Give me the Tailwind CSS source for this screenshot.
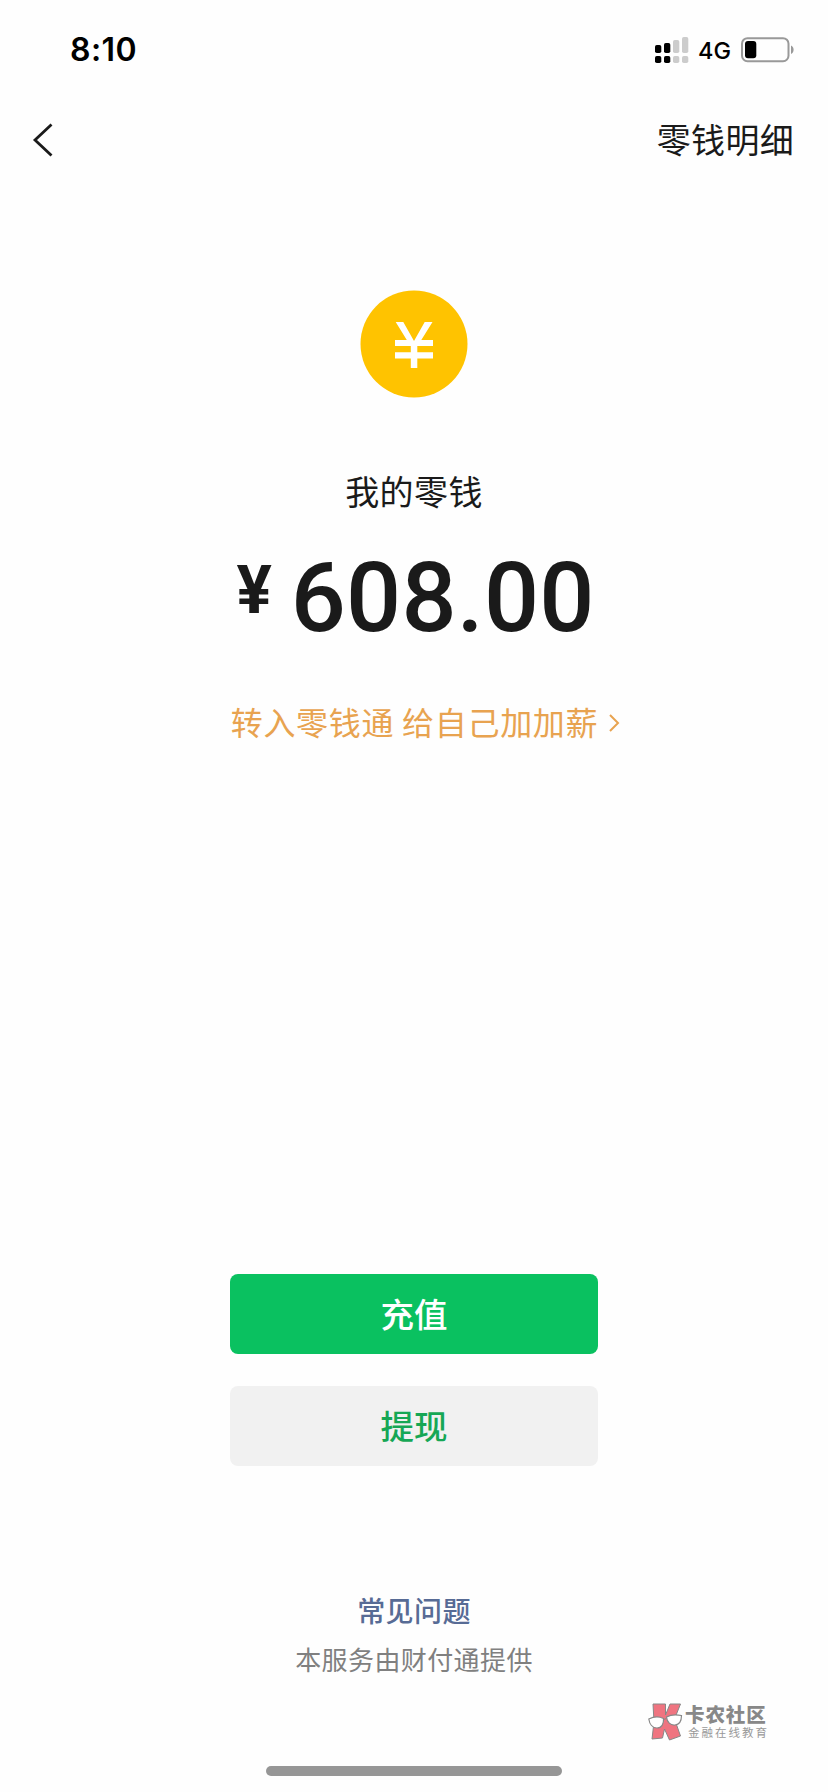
<!DOCTYPE html>
<html lang="zh-CN">
<head>
<meta charset="utf-8">
<title>我的零钱</title>
<script src="https://cdn.jsdelivr.net/npm/@tailwindcss/browser@4"></script>
</head>
<body class="bg-white">
<div class="relative flex h-[1792px] w-[828px] flex-col overflow-hidden bg-[#fefefe] font-['Noto_Sans_CJK_SC',sans-serif] text-[#1a1a1a]">
  <header class="flex h-[100px] items-center justify-between pr-[33px] pl-[70px] text-black">
    <span class="font-['Inter',sans-serif] text-[32px] leading-[100px] font-semibold tracking-[0.4px]">8:10</span>
    <div class="flex items-center">
      <svg width="34" height="28" viewBox="0 0 34 28" fill="#000">
        <rect x="0" y="9" width="6.3" height="8" rx="1.8"/><rect x="9" y="7" width="6.3" height="10" rx="1.8"/>
        <rect x="18" y="4" width="6.3" height="13" rx="1.8" fill="#ccc"/><rect x="27" y="1" width="6.3" height="16" rx="1.8" fill="#ccc"/>
        <rect x="0" y="20" width="6.3" height="7" rx="1.8"/><rect x="9" y="20" width="6.3" height="7" rx="1.8"/>
        <rect x="18" y="20" width="6.3" height="7" rx="1.8" fill="#ccc"/><rect x="27" y="20" width="6.3" height="7" rx="1.8" fill="#ccc"/>
      </svg>
      <span class="ml-[9.5px] w-[43px] pt-px font-['Inter',sans-serif] text-[23.500px] leading-7 font-medium">4G</span>
      <svg width="54" height="26" viewBox="0 0 54 26">
        <rect x="1" y="1.2" width="46.5" height="23" rx="5.5" fill="none" stroke="#999" stroke-width="2"/>
        <rect x="4" y="4" width="11.3" height="17.3" rx="3" fill="#000"/>
        <path d="M50 8.500c3.500 1.200 3.500 7.300 0 8.500z" fill="#999"/>
      </svg>
    </div>
  </header>
  <nav class="flex h-20 items-center justify-between pr-[34px] pl-[32px]">
    <svg width="24" height="36" viewBox="0 0 24 36" fill="none" stroke="#1a1a1a" stroke-width="2.8"><path d="M19.500 2.500 3 18l16.500 15.500"/></svg>
    <span class="pb-[3px] text-[34px] leading-[77px] tracking-[0.3px]">零钱明细</span>
  </nav>
  <main class="flex flex-col items-center">
    <svg class="mt-[110px]" width="108" height="108" viewBox="0 0 108 108">
      <circle cx="54" cy="54" r="53.500" fill="#ffc300"/>
      <path fill="#fff" d="M35.700 32h7.600L54 51 64.700 32h7.800L61.300 50H73v6H57.300v6.200H73v6.300H57.300V78h-6.500v-9.500H35v-6.300h15.800V56H35v-6h11.800z"/>
    </svg>
    <h1 class="mt-[68px] h-[51px] text-[34px] leading-[50px] tracking-[0.4px]">我的零钱</h1>
    <div class="ml-[3px] flex h-[140px] items-start pt-[40px] font-['Roboto',sans-serif]">
      <span class="mr-[19px] text-[66px] leading-[68px] font-bold">¥</span>
      <span class="mt-[4px] text-[97px] leading-[74px] font-medium tracking-[0.200px]">608.00</span>
    </div>
    <a class="mt-[39px] ml-[25px] flex h-[50px] items-center text-[32px] leading-[50px] tracking-[0.7px] text-[#e8a350]">
      <span>转入零钱通 给自己加加薪</span>
      <svg class="mt-[3px] ml-[10px]" width="14" height="20" viewBox="0 0 14 20" fill="none" stroke="#e8a350" stroke-width="2"><path d="M2 2l8 8-8 8"/></svg>
    </a>
    <button class="mt-[528px] h-20 w-[368px] rounded-lg bg-[#0ac160] pb-[3px] text-[33.500px] leading-[77px] font-medium text-white">充值</button>
    <button class="mt-8 h-20 w-[368px] rounded-lg bg-[#f1f1f1] pb-[3px] text-[33.500px] leading-[77px] font-medium text-[#16a755]">提现</button>
    <a class="mt-[124px] h-10 text-[28px] leading-10 font-medium tracking-[0.400px] text-[#576b95]">常见问题</a>
    <p class="mt-[9px] h-[41px] text-[26px] leading-10 tracking-[0.400px] text-[#808080]">本服务由财付通提供</p>
  </main>
  <footer class="flex flex-col">
    <div class="mt-[22px] flex h-[40px] pl-[648px]">
      <svg width="36" height="40" viewBox="0 0 36 40">
        <path fill="#ef7480" stroke="#888" d="M5 2h12.500v11L22 2h10.500l-6 15 6 17-11 4-5-11-2 9-10.500 1L6 20z"/>
        <g fill="#fff" stroke="#888" stroke-width="1.200"><path d="M.8 17c5-2.500 10.500-2.500 14.700-.5.500 5.500-2 9.500-6.500 9.500s-7.500-4-8.200-9zM18.500 15c4.500-2.500 10-2.500 15-1.500 0 5-2 9-6.500 9.500s-8-3-8.500-8z"/></g>
        <path d="M15.500 17.500l3-1" stroke="#888"/>
      </svg>
      <div class="ml-[1px] flex flex-col text-[#888]">
        <span class="mt-[2px] text-[19.500px] leading-[20px] font-black tracking-[0.900px]">卡农社区</span>
        <span class="ml-[3px] text-[11.500px] leading-[16px] tracking-[2px] text-[#999]">金融在线教育</span>
      </div>
    </div>
    <div class="mt-[24px] ml-[266px] h-[10px] w-[296px] rounded-full bg-[#969696]"></div>
  </footer>
</div>
</body>
</html>
